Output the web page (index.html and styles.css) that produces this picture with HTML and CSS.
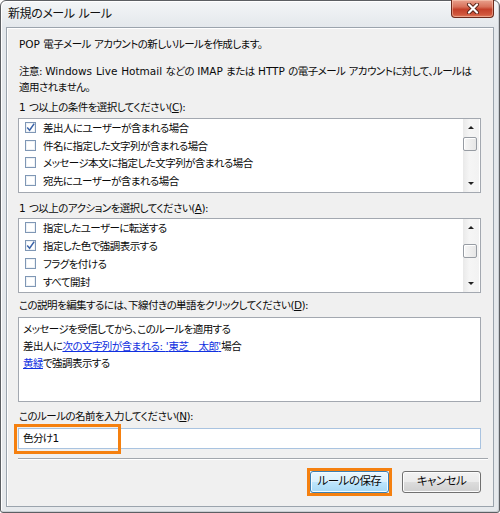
FILE: index.html
```html
<!DOCTYPE html>
<html lang="ja">
<head>
<meta charset="utf-8">
<title>新規のメール ルール</title>
<link rel="stylesheet" href="styles.css">
</head>
<body>
<div class="window">
  <div class="titlebar">
    <span class="title">新規のメール ルール</span>
    <div class="close">
      <svg width="16" height="11" viewBox="0 0 16 11"><path d="M4 1.5 L12 9.5 M12 1.5 L4 9.5" stroke="#5a2418" stroke-width="4" stroke-linecap="round"/><path d="M4 1.5 L12 9.5 M12 1.5 L4 9.5" stroke="#ffffff" stroke-width="2.2" stroke-linecap="round"/></svg>
    </div>
  </div>
  <div class="client">
    <p class="intro"><span class="lt">POP</span> 電子メール アカウントの新しいルールを作成します。</p>
    <p class="note">注意: <span class="lt">Windows Live Hotmail</span> などの <span class="lt">IMAP</span> または <span class="lt">HTTP</span> の電子メール アカウントに対して、ルールは<br>適用されません。</p>

    <div class="label label-first"><span class="lt">1</span> つ以上の条件を選択してください(<u>C</u>):</div>
    <div class="listbox">
      <ul class="items">
        <li><span class="cb checked"><svg width="11" height="11" viewBox="0 0 11 11"><path d="M2.2 5.6 L4.6 8.2 L9.2 1.6" fill="none" stroke="#3a63a8" stroke-width="1.5"/></svg></span>差出人にユーザーが含まれる場合</li>
        <li><span class="cb"></span>件名に指定した文字列が含まれる場合</li>
        <li><span class="cb"></span>メッセージ本文に指定した文字列が含まれる場合</li>
        <li><span class="cb"></span>宛先にユーザーが含まれる場合</li>
      </ul>
      <div class="scrollbar">
        <div class="arrow"><span class="tri-up"></span></div>
        <div class="track"><div class="thumb thumb-1"></div></div>
        <div class="arrow"><span class="tri-down"></span></div>
      </div>
    </div>

    <div class="label label-second"><span class="lt">1</span> つ以上のアクションを選択してください(<u>A</u>):</div>
    <div class="listbox">
      <ul class="items">
        <li><span class="cb"></span>指定したユーザーに転送する</li>
        <li><span class="cb checked"><svg width="11" height="11" viewBox="0 0 11 11"><path d="M2.2 5.6 L4.6 8.2 L9.2 1.6" fill="none" stroke="#3a63a8" stroke-width="1.5"/></svg></span>指定した色で強調表示する</li>
        <li><span class="cb"></span>フラグを付ける</li>
        <li><span class="cb"></span>すべて開封</li>
      </ul>
      <div class="scrollbar">
        <div class="arrow"><span class="tri-up"></span></div>
        <div class="track"><div class="thumb thumb-2"></div></div>
        <div class="arrow"><span class="tri-down"></span></div>
      </div>
    </div>

    <div class="label label-third">この説明を編集するには、下線付きの単語をクリックしてください(<u>D</u>):</div>
    <div class="desc">
      <div>メッセージを受信してから、このルールを適用する</div>
      <div>差出人に<a class="link">次の文字列が含まれる: <span class="lt">'</span>東芝　太郎<span class="lt">'</span></a>場合</div>
      <div><a class="link">黄緑</a>で強調表示する</div>
    </div>

    <div class="label label-fourth">このルールの名前を入力してください(<u>N</u>):</div>
    <div class="name-field">
      <div class="input">色分け<span class="lt">1</span></div>
      <div class="hl hl-input"></div>
    </div>

    <div class="sep"></div>

    <div class="buttons">
      <div class="btn btn-default">ルールの保存<span class="hl hl-btn"></span></div>
      <div class="btn">キャンセル</div>
    </div>
  </div>
</div>
</body>
</html>
```

FILE: styles.css
```css
* { box-sizing: border-box; }
html, body { margin: 0; padding: 0; }
body {
  width: 500px;
  height: 513px;
  background: #ffffff;
  font-family: "DejaVu Sans", "Noto Sans CJK JP", sans-serif;
  font-size: 10.5px;
  font-feature-settings: "palt";
  letter-spacing: -0.55px;
  word-spacing: 0.5px;
  color: #0a0a0a;
}
.lt { letter-spacing: 0; }
.window {
  width: 500px;
  height: 513px;
  border: 1px solid #5c5f63;
  border-radius: 6px 6px 3px 3px;
  background: linear-gradient(to bottom, #f3f5f7 0px, #e4e8ec 26px, #e6e9ec 100%);
  box-shadow: inset 1px 1px 0 #ffffff, inset -1px -1px 0 #c9ced3;
  padding: 0 5px 5px 5px;
  display: flex;
  flex-direction: column;
}
.titlebar {
  height: 26px;
  display: flex;
  justify-content: space-between;
  align-items: flex-start;
  padding-left: 2px;
}
.title {
  font-size: 12px;
  line-height: 26px;
  color: #111;
  letter-spacing: -0.4px;
}
.close {
  width: 43px;
  height: 18px;
  margin-top: -1px;
  border: 1px solid #6d2a1c;
  border-top: none;
  border-radius: 0 0 4px 4px;
  background: linear-gradient(to bottom, #e9a18d 0%, #d8715a 40%, #c4402a 55%, #d0573d 85%, #e07b5d 100%);
  box-shadow: inset 0 0 0 1px rgba(255,220,200,0.45);
  display: flex;
  align-items: center;
  justify-content: center;
}
.client {
  flex: 1;
  border: 1px solid #9ba4ad;
  box-shadow: inset 1px 1px 0 #ffffff;
  background: #f0f0f0;
  padding: 9px 12px 0 11px;
  display: flex;
  flex-direction: column;
}
p { margin: 0; }
.intro { line-height: 15px; padding-left: 1px; }
.note { line-height: 15.5px; margin-top: 12px; padding-left: 1px; white-space: nowrap; }
.label { line-height: 15px; padding-left: 1px; }
.label u { text-decoration: underline; }
.label-first { margin-top: 5px; }
.label-second { margin-top: 8px; }
.label-third { margin-top: 5px; }
.label-fourth { margin-top: 7px; }

.listbox {
  margin-top: 2.5px;
  height: 75px;
  border: 1px solid #a3a8b0;
  background: #ffffff;
  display: flex;
}
.items {
  list-style: none;
  margin: 0;
  padding: 0 0 0 6px;
  flex: 1;
}
.items li {
  height: 17.75px;
  display: flex;
  align-items: center;
  white-space: nowrap;
}
.cb {
  width: 11px;
  height: 11px;
  border: 1px solid #7f97b5;
  background: #ffffff;
  box-shadow: inset 0 0 0 1px #eef2f6;
  margin-right: 7px;
  position: relative;
  flex: none;
}
.cb svg { position: absolute; left: -1px; top: -1px; }

.scrollbar {
  width: 16px;
  margin: 0 1px 0 0;
  background: linear-gradient(to right, #e9e9e9, #f5f5f5 40%, #f2f2f2);
  display: flex;
  flex-direction: column;
}
.arrow {
  height: 17px;
  display: flex;
  align-items: center;
  justify-content: center;
}
.tri-up {
  width: 0; height: 0;
  border-left: 3px solid transparent;
  border-right: 3px solid transparent;
  border-bottom: 3px solid #222;
}
.tri-down {
  width: 0; height: 0;
  border-left: 3px solid transparent;
  border-right: 3px solid transparent;
  border-top: 3px solid #222;
}
.track { flex: 1; }
.thumb {
  width: 14px;
  height: 14px;
  border: 1px solid #979ca3;
  border-radius: 2px;
  background: linear-gradient(to right, #f7f7f7, #e6e6e6);
  box-shadow: inset 1px 1px 0 #ffffff;
}
.thumb-1 { margin-top: 1px; }
.thumb-2 { margin-top: 8px; }

.desc {
  margin-top: 4px;
  height: 85px;
  border: 1px solid #a3a8b0;
  background: #ffffff;
  padding: 3px 0 0 4px;
  line-height: 17px;
}
.link {
  color: #1030e0;
  text-decoration: underline;
}

.name-field {
  margin-top: 4px;
  position: relative;
}
.input {
  height: 21px;
  border: 1px solid #a9c3e0;
  background: #ffffff;
  padding-left: 4px;
  line-height: 19px;
}
.hl {
  position: absolute;
  border: 3px solid #f5800f;
  pointer-events: none;
}
.hl-input {
  left: -4px;
  top: -4px;
  width: 107px;
  height: 30px;
}

.sep {
  margin-top: 9px;
  height: 2px;
  border-top: 1px solid #a2a7ad;
  border-bottom: 1px solid #ffffff;
  margin-right: -7px;
}

.buttons {
  margin-top: 11px;
  display: flex;
  justify-content: flex-end;
  gap: 13px;
}
.btn {
  position: relative;
  width: 79px;
  height: 22px;
  border: 1px solid #707070;
  border-radius: 3px;
  background: linear-gradient(to bottom, #f2f2f2 0%, #ebebeb 50%, #dddddd 51%, #cfcfcf 100%);
  box-shadow: inset 0 0 0 1px #fcfcfc;
  display: flex;
  align-items: center;
  justify-content: center;
  line-height: 1;
  font-size: 11.5px;
}
.btn-default {
  border-color: #3c7fb1;
  background: linear-gradient(to bottom, #eaf6fd 0%, #d9f0fc 50%, #bee6fd 51%, #a7d9f5 100%);
  box-shadow: inset 0 0 0 1px #f4fbff;
}
.hl-btn {
  left: -4px;
  top: -4px;
  right: -4px;
  bottom: -4px;
}
```
